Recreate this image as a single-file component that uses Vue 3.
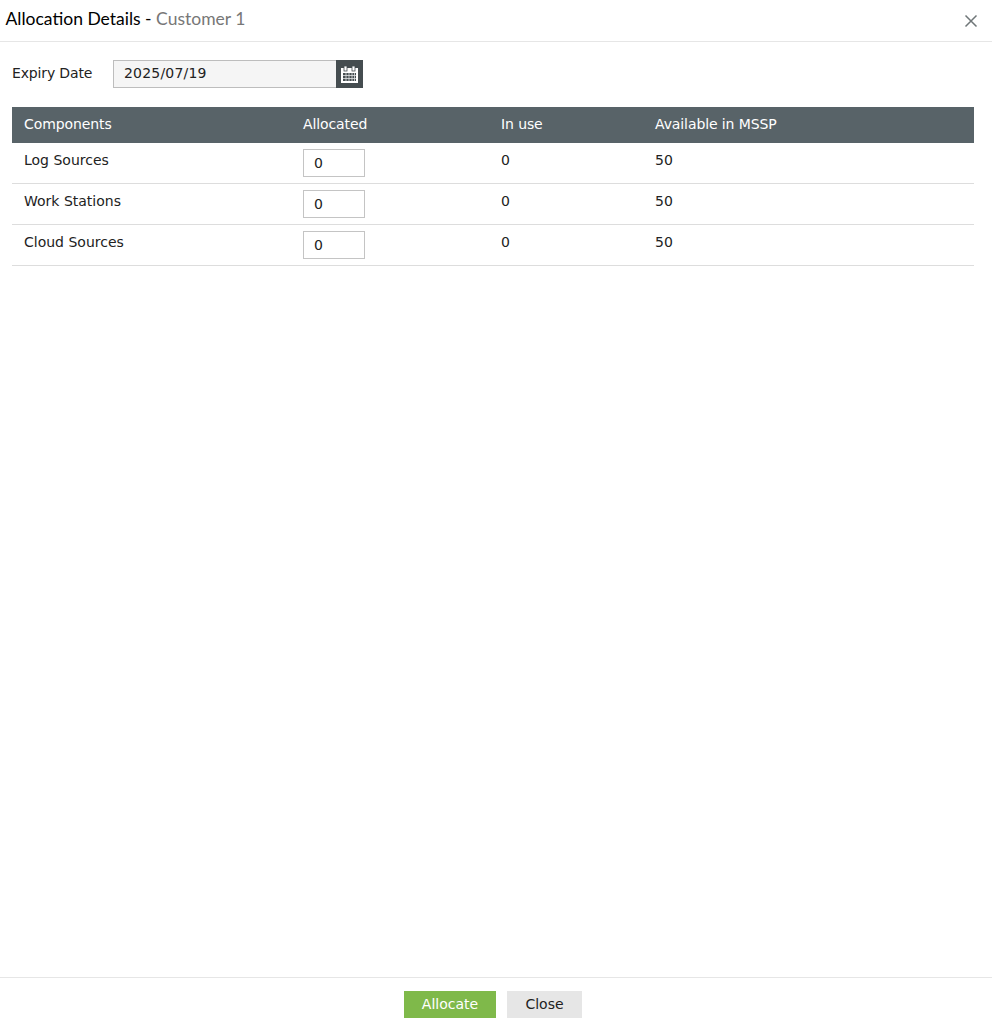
<template>
  <div class="dialog">
    <header class="dialog__head">
      <h1 class="dialog__title">Allocation Details - <span class="dialog__customer">Customer 1</span></h1>
      <svg class="dialog__close" width="14" height="14" viewBox="0 0 14 14">
        <path d="M1.5 1.5 L12.5 12.5 M12.5 1.5 L1.5 12.5" stroke="#6f7678" stroke-width="1.5" fill="none" />
      </svg>
    </header>

    <main class="dialog__body">
      <div class="expiry">
        <label class="expiry__label">Expiry Date</label>
        <div class="expiry__field">
          <div class="expiry__value">2025/07/19</div>
          <div class="expiry__btn">
            <svg width="19" height="19" viewBox="0 0 19 19">
              <path d="M1 3h17v15H1z" fill="#fff" />
              <rect x="4" y="1" width="3" height="5" fill="#fff" stroke="#454d50" stroke-width="0.8" />
              <rect x="12" y="1" width="3" height="5" fill="#fff" stroke="#454d50" stroke-width="0.8" />
              <rect x="3" y="8" width="13" height="8" fill="#454d50" />
              <path d="M3 10.500h13M3 13.500h13M6 8v8M9 8v8M12 8v8M14.500 8v8" stroke="#dfe2e3" stroke-width="0.8" />
            </svg>
          </div>
        </div>
      </div>

      <div class="table">
        <div class="table__row table__row_head">
          <div v-for="col in columns" :key="col">{{ col }}</div>
        </div>
        <div v-for="row in rows" :key="row" class="table__row">
          <div>{{ row }}</div>
          <div><div class="table__input">0</div></div>
          <div>0</div>
          <div>50</div>
        </div>
      </div>
    </main>

    <footer class="dialog__foot">
      <button class="btn btn_primary">Allocate</button>
      <button class="btn">Close</button>
    </footer>
  </div>
</template>

<script setup>
const columns = ["Components", "Allocated", "In use", "Available in MSSP"];
const rows = ["Log Sources", "Work Stations", "Cloud Sources"];
</script>

<style>
html,
body {
  margin: 0;
  background: #fff;
}
</style>

<style scoped>
.dialog {
  height: 1022px;
  display: flex;
  flex-direction: column;
  font-family: "DejaVu Sans", sans-serif;
  font-size: 14px;
  color: #222;
}

.dialog__head {
  height: 42px;
  box-sizing: border-box;
  border-bottom: 1px solid #e6e6e6;
  padding: 0 14px 0 5.5px;
  display: flex;
  align-items: center;
  justify-content: space-between;
  flex-shrink: 0;
}

.dialog__title {
  margin: 0 0 5px;
  font-family: Lato, sans-serif;
  font-size: 17.5px;
  font-weight: 400;
  color: #000;
}

.dialog__customer {
  color: #777;
}

.dialog__close {
  display: block;
}

.dialog__body {
  flex: 1;
  padding: 18px 18px 0 12px;
}

.expiry {
  display: flex;
  align-items: center;
  height: 28px;
}

.expiry__label {
  width: 101px;
  letter-spacing: -0.15px;
  margin-top: -3px;
}

.expiry__field {
  display: flex;
  width: 250px;
  height: 28px;
}

.expiry__value {
  flex: 1;
  box-sizing: border-box;
  border: 1px solid #bdbdbd;
  background: #f5f5f5;
  padding-left: 10px;
  line-height: 24px;
  letter-spacing: 0.2px;
}

.expiry__btn {
  width: 27px;
  background: #454d50;
  margin-left: -1px;
  display: flex;
  align-items: center;
  justify-content: center;
}

.table {
  margin-top: 19px;
}

.table__row {
  display: grid;
  grid-template-columns: 279px 198px 154px 1fr;
  height: 41px;
  box-sizing: border-box;
  padding: 9px 0 0 12px;
  border-bottom: 1px solid #ddd;
  line-height: 17px;
}

.table__row_head {
  height: 36px;
  padding-top: 9px;
  border-bottom: 0;
  background: #586368;
  color: #fff;
  letter-spacing: -0.1px;
}

.table__input {
  box-sizing: border-box;
  width: 62px;
  height: 28px;
  margin-top: -3px;
  padding: 5px 0 0 10px;
  border: 1px solid #c4c4c4;
}

.dialog__foot {
  height: 45px;
  box-sizing: border-box;
  border-top: 1px solid #e6e6e6;
  padding: 13px 6px 0 0;
  display: flex;
  justify-content: center;
  gap: 11px;
  flex-shrink: 0;
}

.btn {
  height: 27px;
  width: 75px;
  border: 0;
  padding: 0 0 2px;
  background: #e6e6e6;
  color: #222;
  font-family: inherit;
  font-size: 14px;
}

.btn_primary {
  width: 92px;
  background: #7fb94a;
  color: #fff;
}
</style>
